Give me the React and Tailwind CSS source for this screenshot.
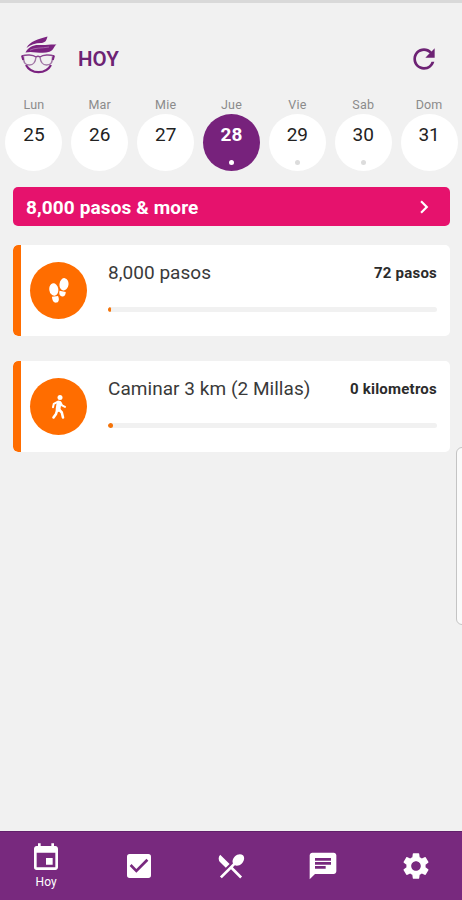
import {
  MdChat,
  MdCheckBox,
  MdChevronRight,
  MdEvent,
  MdLocalDining,
  MdRefresh,
  MdSettings,
} from "react-icons/md";

const days = [
  { name: "Lun", date: 25 },
  { name: "Mar", date: 26 },
  { name: "Mie", date: 27 },
  { name: "Jue", date: 28, active: true, dot: true },
  { name: "Vie", date: 29, dot: true },
  { name: "Sab", date: 30, dot: true },
  { name: "Dom", date: 31 },
];

const Logo = () => (
  <svg width="36" height="38" viewBox="0 0 36 38" fill="none">
    {/* hair */}
    <path d="M5.500 12C9 5 17 3.500 26.500 0.500C25.500 4 25 6 21 7C15 6.800 10 8.500 5.500 12Z" fill="#7b2380" />
    <path
      d="M4.500 16.500C8 10 13 8.500 19 9C24 9.500 30 8 35.500 8.500C32.500 10.500 33 14 28.500 15.800C20 18.500 12 14.500 4.500 16.500Z"
      fill="#7b2380"
    />
    <path d="M9 14.200C14 11.500 20 12.500 28 11" stroke="#b684ba" strokeWidth="0.700" />
    {/* face */}
    <path d="M5 29C10 38.500 25 38.500 30 29" stroke="#7b2380" strokeWidth="2.200" />
    {/* glasses */}
    <path
      d="M1 20C5 18.500 12 18.500 15 21C16 20.300 18 20.300 19 21C22 18.500 29 18.500 33 20"
      stroke="#8a4590"
      strokeWidth="1.400"
    />
    <path
      d="M2.500 20.500C2.500 27 4 29 8.500 29C13 29 14.500 26 15 21M19 21C19.500 26 21 29 25.500 29C30 29 31.500 27 31.500 20.500"
      stroke="#a277a6"
      strokeWidth="1.400"
    />
    <path d="M1 19.500L2.200 24M33 19.500L31.800 24" stroke="#7b2380" strokeWidth="2" />
  </svg>
);

const ShoePrints = () => (
  <svg width="20" height="26" viewBox="0 0 20 26" fill="currentColor">
    <ellipse cx="4.800" cy="11.500" rx="4.500" ry="6.200" transform="rotate(-8 4.800 11.500)" />
    <path d="M3 18.800L9 17.900C10.700 21.300 9.700 24.200 7.400 24.600C4.700 25 3.100 22.500 3 18.800Z" />
    <ellipse cx="15" cy="6.300" rx="4.500" ry="6.200" transform="rotate(8 15 6.300)" />
    <path d="M10.500 12.700L16.800 13.900C16.600 17.200 15 18.900 13 18.500C10.500 18 9.800 15.700 10.500 12.700Z" />
  </svg>
);

const Walker = () => (
  <svg
    width="18"
    height="26"
    viewBox="0 0 18 26"
    fill="none"
    stroke="currentColor"
    strokeLinecap="round"
    strokeLinejoin="round"
  >
    <circle cx="10" cy="3.600" r="2.500" fill="currentColor" stroke="none" />
    <path d="M9 9L8 15.500" strokeWidth="4.800" />
    <path d="M7.500 7.800L3.800 9.800L3 13.300" strokeWidth="2" />
    <path d="M10.500 8.500L12 11.300L15 12.900" strokeWidth="2" />
    <path d="M7.200 16L6 20L3.500 23.500" strokeWidth="2.600" />
    <path d="M9 15.500L11.800 18.500L13 23.500" strokeWidth="2.600" />
  </svg>
);

const goals = [
  {
    title: "8,000 pasos",
    value: "72 pasos",
    icon: <ShoePrints />,
    bar: "w-[3px]",
  },
  {
    title: "Caminar 3 km (2 Millas)",
    value: "0 kilometros",
    icon: <Walker />,
    bar: "w-[5px]",
  },
];

const tabs = [
  { icon: MdEvent, label: "Hoy" },
  { icon: MdCheckBox },
  { icon: MdLocalDining },
  { icon: MdChat },
  { icon: MdSettings },
];

const Day = ({ day }) => (
  <div className="flex flex-1 flex-col items-center">
    <span className="h-[18px] text-[12.5px] leading-[17px] tracking-[0.2px] text-[#8b8b8b]">
      {day.name}
    </span>
    <div
      className={`flex h-[57px] w-[57px] shrink-0 flex-col items-center rounded-full pt-[9px] ${
        day.active ? "bg-[#77227c] font-bold text-white" : "bg-white text-[#222]"
      }`}
    >
      <span className="text-[19px] leading-6">{day.date}</span>
      {day.dot && (
        <span
          className={`mt-[13px] h-[5px] w-[5px] rounded-full ${
            day.active ? "bg-white" : "bg-[#dcdcdc]"
          }`}
        />
      )}
    </div>
  </div>
);

const GoalCard = ({ goal }) => (
  <div className="flex h-[91px] overflow-hidden rounded-[5px] bg-white">
    <div className="w-2 shrink-0 rounded-l-[5px] bg-[#ff6d00]" />
    <div className="mt-[17px] ml-[9px] flex h-[57px] w-[57px] shrink-0 items-center justify-center rounded-full bg-[#ff6d00] text-white">
      {goal.icon}
    </div>
    <div className="ml-[21px] flex-1 pt-[16px] pr-[13px]">
      <div className="flex items-center justify-between whitespace-nowrap">
        <span className="text-[19px] leading-6 tracking-[0.04px] text-[#3a3a3a]">
          {goal.title}
        </span>
        <span className="text-[15px] leading-6 font-bold tracking-[0.22px] text-[#2b2b2b]">
          {goal.value}
        </span>
      </div>
      <div className="mt-[22px] h-[5px] overflow-hidden rounded-full bg-[#f1f1f1]">
        <div className={`h-full rounded-full bg-[#f57308] ${goal.bar}`} />
      </div>
    </div>
  </div>
);

const App = () => {
  return (
    <div className="relative flex h-[900px] w-[462px] flex-col overflow-hidden bg-[#f1f1f1] font-['Roboto',sans-serif]">
      <div className="h-[3px] shrink-0 bg-[#d9d9d9]" />

      <header className="flex h-[93px] shrink-0 items-start pr-[22px] pl-[21px]">
        <div className="mt-[33px]">
          <Logo />
        </div>
        <h1 className="mt-[44px] ml-[21px] flex-1 text-[20.5px] leading-6 font-semibold text-[#6d2374]">
          HOY
        </h1>
        <MdRefresh size={32} className="mt-[40px] text-[#6d2374]" />
      </header>

      <div className="flex pl-px">
        {days.map((day) => (
          <Day key={day.name} day={day} />
        ))}
      </div>

      <main className="mt-[16px] flex-1 pr-[12px] pl-[13px]">
        <button className="flex h-[39px] w-full items-center justify-between rounded-[5px] bg-[#e6126d] pr-[13px] pl-[13px] text-[19px] font-bold tracking-[0.12px] text-white">
          <span className="pt-[4px]">8,000 pasos &amp; more</span>
          <MdChevronRight size={26} />
        </button>
        <div className="mt-[19px] flex flex-col gap-[25px]">
          {goals.map((goal) => (
            <GoalCard key={goal.title} goal={goal} />
          ))}
        </div>
      </main>

      {/* edge panel handle */}
      <div className="absolute top-[447px] -right-3 h-[178px] w-[18px] rounded-[6px] border border-[#c4c4c4] bg-[#fafafa]" />

      <nav className="flex h-[69px] shrink-0 border-t border-[#62206a] bg-[#78297e] text-white">
        {tabs.map(({ icon: Icon, label }, i) => (
          <div
            key={i}
            className="flex flex-1 flex-col items-center justify-center"
          >
            <Icon size={32} />
            {label && (
              <span className="text-[12px] leading-[17px] tracking-[0.2px]">{label}</span>
            )}
          </div>
        ))}
      </nav>
    </div>
  );
};

export default App;
